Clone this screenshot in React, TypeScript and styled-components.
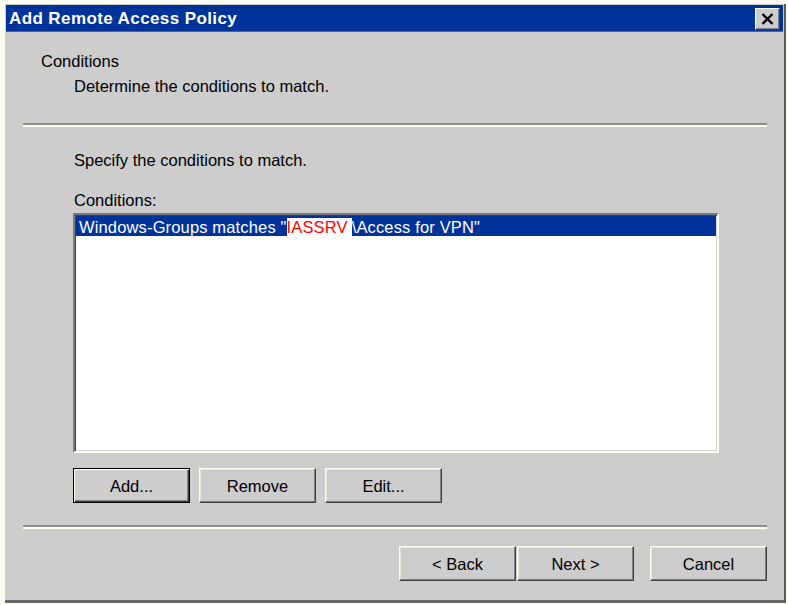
import React from 'react'
import styled, { createGlobalStyle, css } from 'styled-components'

const GlobalStyle = createGlobalStyle`
  html, body {
    margin: 0;
    padding: 0;
    background: #fdfdf2;
  }
  body {
    font-family: "Liberation Sans", Arial, sans-serif;
  }
`

const Window = styled.div`
  box-sizing: border-box;
  width: 781px;
  height: 599px;
  margin: 4px 0 0 5px;
  padding: 1px 1px 0 1px;
  background: #cdcdcd;
  border-right: 2px solid #5a5a5a;
  border-bottom: 3px solid #6a6a6a;
  display: flex;
  flex-direction: column;
`

const TitleBar = styled.div`
  height: 27px;
  background: #003399;
  box-shadow: inset 0 -1px #3a6aa8;
  display: flex;
  align-items: center;
  justify-content: space-between;
  padding: 0 3px;
`

const TitleText = styled.span`
  color: #fff;
  font-weight: bold;
  font-size: 17px;
  letter-spacing: 0.4px;
`

const CloseButton = styled.button`
  box-sizing: border-box;
  width: 25px;
  height: 22px;
  padding: 0;
  background: #cdcdcd;
  border: 1px solid;
  border-color: #fffff0 #404040 #404040 #fffff0;
  box-shadow: inset -1px -1px #808080;
  display: flex;
  align-items: center;
  justify-content: center;
`

const Header = styled.div`
  box-sizing: border-box;
  height: 91px;
  padding: 19px 0 0 35px;
  font-size: 16.5px;
  line-height: 20px;
  color: #000;
`

const HeaderSub = styled.div`
  margin: 5px 0 0 33px;
`

const Separator = styled.div<{ $gap?: number }>`
  height: 0;
  margin: ${p => p.$gap ?? 0}px 16px 0 17px;
  border-top: 2px solid #8f8f8f;
  border-bottom: 2px solid #fffff0;
`

const Main = styled.div`
  padding: 23px 0 0 67px;
  font-size: 16.5px;
  line-height: 20px;
  color: #000;
`

const Label = styled.div<{ $gap?: number }>`
  margin-top: ${p => p.$gap ?? 0}px;
  padding-left: 1px;
`

const ListBox = styled.div`
  box-sizing: border-box;
  width: 646px;
  height: 240px;
  margin-top: 3px;
  padding: 1px;
  background: #fff;
  border: 2px solid;
  border-color: #7a7a7a #fffff0 #fffff0 #7a7a7a;
  box-shadow: inset 1px 1px #404040, inset -1px -1px #d4d4d0;
`

const Row = styled.div<{ $selected?: boolean }>`
  height: 20px;
  line-height: 22px;
  padding-left: 3px;
  white-space: nowrap;
  letter-spacing: 0.15px;
  ${p => p.$selected && css`
    background: #003399;
    color: #fff;
  `}
`

const Mark = styled.span`
  background: #fff;
  color: #ff0000;
  padding: 0 4px 0 0;
`

const ButtonRow = styled.div`
  display: flex;
  gap: 9px;
  margin-top: 15px;
`

const Button = styled.button<{ $default?: boolean }>`
  box-sizing: border-box;
  width: 117px;
  height: 35px;
  padding: 1px 0 0;
  background: #cdcdcd;
  color: #000;
  font-family: "Liberation Sans", Arial, sans-serif;
  font-size: 16.5px;
  border: 1px solid;
  border-color: #fffff0 #404040 #404040 #fffff0;
  box-shadow: inset -1px -1px #808080, inset 1px 1px #e6e6dc;
  ${p => p.$default && css`
    border: 1px solid #000;
    box-shadow: inset 1px 1px #fffff0, inset -1px -1px #404040, inset -2px -2px #808080;
  `}
`

const Footer = styled.div`
  display: flex;
  justify-content: flex-end;
  padding-right: 16px;
  margin-top: 17px;
`

const WizardPair = styled.div`
  display: flex;
  gap: 1px;
  margin-right: 16px;
`

export default function App() {
  return (
    <>
      <GlobalStyle />
      <Window>
        <TitleBar>
          <TitleText>Add Remote Access Policy</TitleText>
          <CloseButton aria-label='Close'>
            <svg width='13' height='12' viewBox='0 0 13 12'>
              <path d='M1.5 1 L11.5 11 M11.5 1 L1.5 11' stroke='#000' strokeWidth='2.4' />
            </svg>
          </CloseButton>
        </TitleBar>

        <Header>
          <div>Conditions</div>
          <HeaderSub>Determine the conditions to match.</HeaderSub>
        </Header>
        <Separator />

        <Main>
          <Label>Specify the conditions to match.</Label>
          <Label $gap={20}>Conditions:</Label>
          <ListBox>
            <Row $selected>
              Windows-Groups matches "<Mark>IASSRV</Mark>\Access for VPN"
            </Row>
          </ListBox>
          <ButtonRow>
            <Button $default>Add...</Button>
            <Button>Remove</Button>
            <Button>Edit...</Button>
          </ButtonRow>
        </Main>

        <Separator $gap={22} />

        <Footer>
          <WizardPair>
            <Button>&lt; Back</Button>
            <Button>Next &gt;</Button>
          </WizardPair>
          <Button>Cancel</Button>
        </Footer>
      </Window>
    </>
  )
}
